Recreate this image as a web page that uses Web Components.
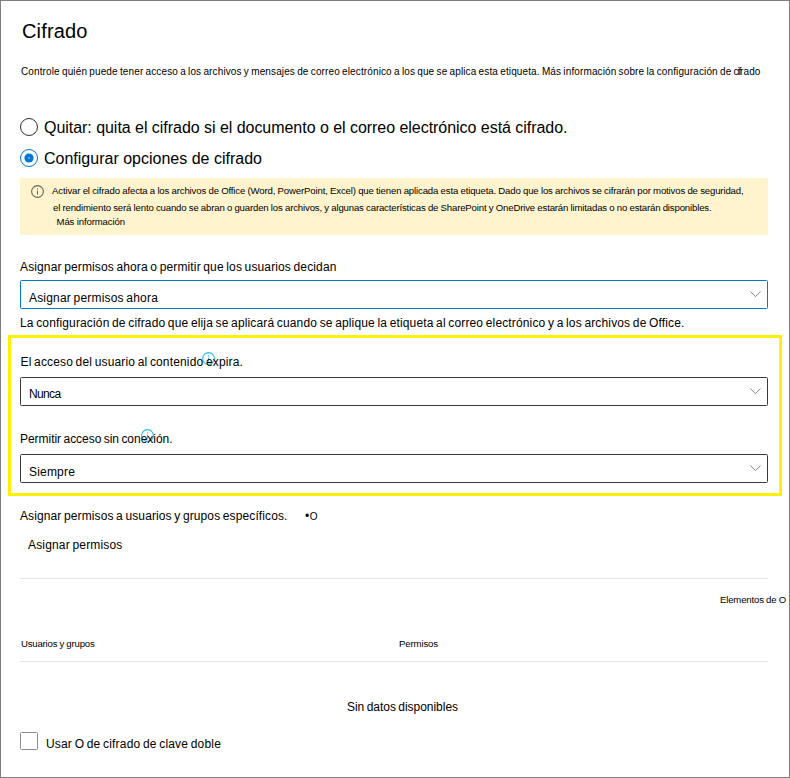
<!DOCTYPE html>
<html lang="es">
<head>
<meta charset="utf-8">
<title>Cifrado</title>
<style>
html,body{margin:0;background:#fff}
body{font-family:"Liberation Sans",Arial,sans-serif;color:#000}
</style>
</head>
<body>
<encryption-page></encryption-page>
<script>
const define = (name, html, setup) => {
  const tpl = document.createElement('template');
  tpl.innerHTML = html;
  customElements.define(name, class extends HTMLElement {
    constructor() {
      super();
      this.attachShadow({ mode: 'open' }).append(tpl.content.cloneNode(true));
    }
    connectedCallback() { if (setup) setup(this, this.shadowRoot); }
  });
};

// One line of text whose tracking is adjusted to a given width.
define('fit-text', `
<style>
:host{display:block;flex:none;white-space:nowrap;font-size:12px;line-height:16px;width:max-content;word-spacing:-.9px}
:host([size="xs"]){font-size:9.6px;line-height:13px;word-spacing:-.2px}
:host([size="s"]){font-size:10px;line-height:13px;word-spacing:-.7px}
:host([size="l"]){font-size:16px;line-height:19px;word-spacing:0}
:host([size="xl"]){font-size:20px;line-height:24px}
</style><slot></slot>`, el => {
  const w = parseFloat(el.getAttribute('w'));
  if (!w) return;
  el.style.letterSpacing = '0px';
  const a = el.getBoundingClientRect().width;
  el.style.letterSpacing = '1px';
  const b = el.getBoundingClientRect().width;
  el.style.letterSpacing = ((w - a) / (b - a)).toFixed(4) + 'px';
});

define('info-icon', `
<style>:host{display:block;flex:none;width:13px;height:13px;color:#6b675c}svg{display:block}</style>
<svg width="13" height="13" viewBox="0 0 13 13" fill="none" stroke="currentColor"><circle cx="6.5" cy="6.5" r="5.9" stroke-width="1.1"/><path d="M6.5 5.5V9.6M6.5 3.3V4.5" stroke-width="1"/></svg>`);

define('radio-option', `
<style>
:host{display:flex;height:19px;gap:6px}
i{box-sizing:border-box;width:18px;height:18px;border:1px solid #323130;border-radius:50%;flex:none;display:grid;place-items:center}
:host([checked]) i{border-color:#0078d4}
svg{display:none}
:host([checked]) svg{display:block}
</style><i><svg width="10" height="10" viewBox="0 0 10 10"><circle cx="5" cy="5" r="4.6" fill="#0078d4"/><circle cx="5" cy="5" r=".7" fill="#fff"/></svg></i><slot></slot>`);

define('info-banner', `
<style>
:host{display:flex;box-sizing:border-box;height:57px;background:#fff4ce;padding:6px 0 0 11px;gap:8px}
info-icon{margin-top:1px}
div{display:flex;flex-direction:column}
</style><info-icon></info-icon><div><slot></slot></div>`);

define('select-box', `
<style>
:host{display:flex;box-sizing:border-box;height:29px;border:1px solid #3b3a39;border-radius:1.5px;padding:0 6px 0 8px;justify-content:space-between;background:#fff}
:host([active]){border-color:#0078d4}
svg{display:block;margin-top:10px}
</style><slot></slot>
<svg width="11" height="7" viewBox="0 0 11 7" fill="none" stroke="#777" stroke-width=".9"><path d="M.4.5L5.5 5.6L10.6.5"/></svg>`);

define('field-label', `
<style>
:host{display:block;position:relative;height:16px}
info-icon{position:absolute;top:var(--icon-y);left:var(--icon-x);color:#29bdf0}
slot{position:relative;display:block}
</style><info-icon></info-icon><slot></slot>`);

define('highlight-box', `
<style>
:host{display:flex;flex-direction:column;box-sizing:border-box;height:161px;margin:4px -14px 0 -12px;border:3px solid #fff200;padding:16px 11px 0 9px}
</style><slot></slot>`);

define('permissions-table', `
<style>
:host{display:block;height:147px}
hr{margin:0;border:0;height:1px;background:#e4e4e4}
.count{margin:14px -18px 0 0;display:flex;justify-content:flex-end}
.head{display:grid;grid-template-columns:378px 1fr;padding-left:1px;margin:31px 0 11px}
.empty{padding-left:327px;margin-top:37px}
</style>
<hr>
<div class="count"><fit-text size="xs" w="66">Elementos de O</fit-text></div>
<div class="head"><fit-text size="xs" w="73.5">Usuarios y grupos</fit-text><fit-text size="xs" w="39">Permisos</fit-text></div>
<hr>
<div class="empty"><fit-text w="111">Sin datos disponibles</fit-text></div>`);

define('check-option', `
<style>
:host{display:flex;gap:8px}
i{box-sizing:border-box;width:18px;height:18px;border:1px solid #8e8c8a;border-radius:1.5px;flex:none}
slot{display:block;margin-top:4px}
</style><i></i><slot></slot>`);

define('encryption-page', `
<style>
:host{display:flex;flex-direction:column;box-sizing:border-box;width:790px;height:778px;border:1px solid #7f7f7f;padding:18px 21px 0 19px;overflow:hidden}
.c{letter-spacing:-1.2px}
</style>
<fit-text size="xl" w="65.5" style="margin-left:2px">Cifrado</fit-text>
<fit-text size="s" w="739.5" style="margin:22px 0 0 1px">Controle quién puede tener acceso a los archivos y mensajes de correo electrónico a los que se aplica esta etiqueta. Más información sobre la configuración de <span class="c">cif</span>rado</fit-text>
<radio-option style="margin-top:40px"><fit-text size="l" w="523.5">Quitar: quita el cifrado si el documento o el correo electrónico está cifrado.</fit-text></radio-option>
<radio-option checked style="margin-top:12px"><fit-text size="l" w="218">Configurar opciones de cifrado</fit-text></radio-option>
<info-banner style="margin-top:10px">
<fit-text size="xs" w="691.5">Activar el cifrado afecta a los archivos de Office (Word, PowerPoint, Excel) que tienen aplicada esta etiqueta. Dado que los archivos se cifrarán por motivos de seguridad,</fit-text>
<fit-text size="xs" w="658.5" style="margin:4px 0 0 1px">el rendimiento será lento cuando se abran o guarden los archivos, y algunas características de SharePoint y OneDrive estarán limitadas o no estarán disponibles.</fit-text>
<fit-text size="xs" w="68.5" style="margin:1px 0 0 4.5px">Más información</fit-text>
</info-banner>
<fit-text w="316.5" style="margin-top:24px">Asignar permisos ahora o permitir que los usuarios decidan</fit-text>
<select-box active style="margin-top:5px"><fit-text w="129" style="margin-top:9px">Asignar permisos ahora</fit-text></select-box>
<fit-text w="664.5" style="margin-top:6px">La configuración de cifrado que elija se aplicará cuando se aplique la etiqueta al correo electrónico y a los archivos de Office.</fit-text>
<highlight-box>
<field-label style="--icon-x:182px;--icon-y:-2px"><fit-text w="222.5" style="margin-left:.5px">El acceso del usuario al contenido expira.</fit-text></field-label>
<select-box style="margin-top:7px"><fit-text w="31.5" style="margin-top:8px">Nunca</fit-text></select-box>
<field-label style="margin-top:25px;--icon-x:120.5px;--icon-y:-2px"><fit-text w="152.5">Permitir acceso sin conexión.</fit-text></field-label>
<select-box style="margin-top:7px"><fit-text w="46" style="margin-top:9px">Siempre</fit-text></select-box>
</highlight-box>
<div style="display:flex;gap:17.5px;margin-top:12px"><fit-text w="267.5">Asignar permisos a usuarios y grupos específicos.</fit-text><fit-text w="13"><span style="font-size:12px">•</span><span style="font-size:10px">O</span></fit-text></div>
<fit-text w="94.5" style="margin:12px 0 25px 8px">Asignar permisos</fit-text>
<permissions-table></permissions-table>
<check-option style="margin-top:7px"><fit-text w="175">Usar O de cifrado de clave doble</fit-text></check-option>
`);
</script>
</body>
</html>
